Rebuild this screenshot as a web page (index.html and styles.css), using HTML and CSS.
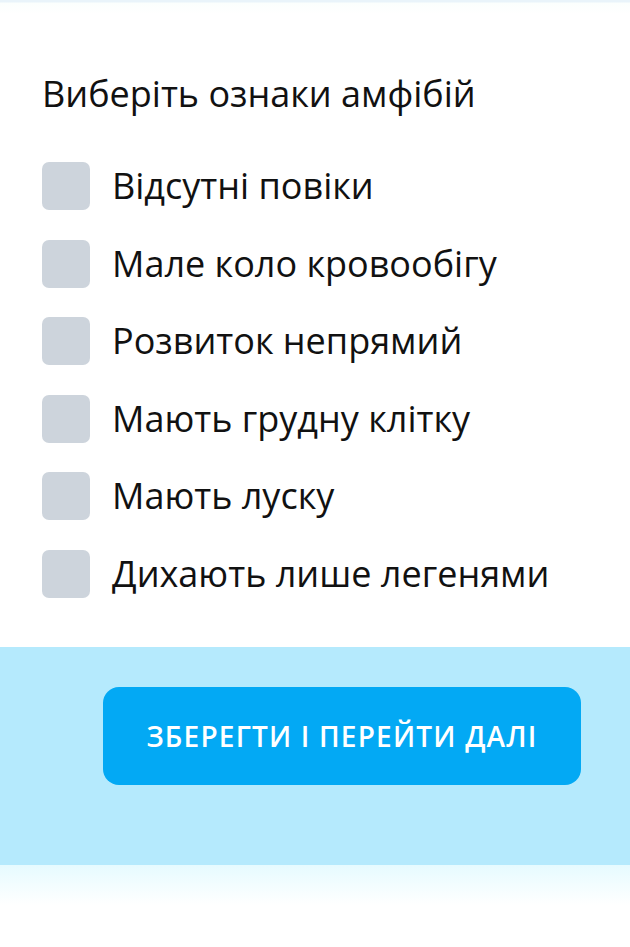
FILE: index.html
```html
<!DOCTYPE html>
<html lang="uk">
<head>
  <meta charset="UTF-8">
  <title>Ознаки амфібій</title>
  <link rel="stylesheet" href="styles.css">
</head>
<body>
  <div class="top-line"></div>
  <div class="quiz">
    <div class="question">Виберіть ознаки амфібій</div>
    <div class="options">
      <label class="option"><span class="box"></span><span class="label">Відсутні повіки</span></label>
      <label class="option"><span class="box"></span><span class="label">Мале коло кровообігу</span></label>
      <label class="option"><span class="box"></span><span class="label">Розвиток непрямий</span></label>
      <label class="option"><span class="box"></span><span class="label">Мають грудну клітку</span></label>
      <label class="option"><span class="box"></span><span class="label">Мають луску</span></label>
      <label class="option"><span class="box"></span><span class="label">Дихають лише легенями</span></label>
    </div>
  </div>
  <div class="footer">
    <button class="btn">Зберегти і перейти далі</button>
  </div>
  <div class="fade"></div>
</body>
</html>
```

FILE: styles.css
```css
body {
  margin: 0;
  background-color: #fff;
  font-family: "Open Sans", sans-serif;
  color: #111;
}
.top-line {
  height: 14px;
  background: linear-gradient(#e9f4fa 0, #e9f4fa 2px, #fbfffd 3px, #fff 14px);
}
.quiz {
  padding: 58px 42px 0 42px;
  height: 633px;
  box-sizing: border-box;
}
.question {
  font-size: 36px;
  line-height: 44px;
}
.options {
  margin-top: 46px;
  display: flex;
  flex-direction: column;
  gap: 29.6px;
}
.option {
  display: flex;
  align-items: center;
  gap: 22px;
}
.box {
  width: 48px;
  height: 48px;
  flex-shrink: 0;
  background-color: #cdd4dc;
  border-radius: 7px;
}
.label {
  font-size: 36px;
  line-height: 48px;
}
.footer {
  background-color: #b5eafd;
  height: 218px;
  padding: 40px 49px 0 103px;
  box-sizing: border-box;
}
.btn {
  display: block;
  width: 100%;
  height: 98px;
  border: none;
  border-radius: 16px;
  background-color: #03a9f4;
  color: #fff;
  font-family: "Open Sans", sans-serif;
  font-weight: 600;
  font-size: 28px;
  letter-spacing: 1.2px;
  text-transform: uppercase;
}
.fade {
  height: 40px;
  background: linear-gradient(#e6fbff, #fff);
}
```
